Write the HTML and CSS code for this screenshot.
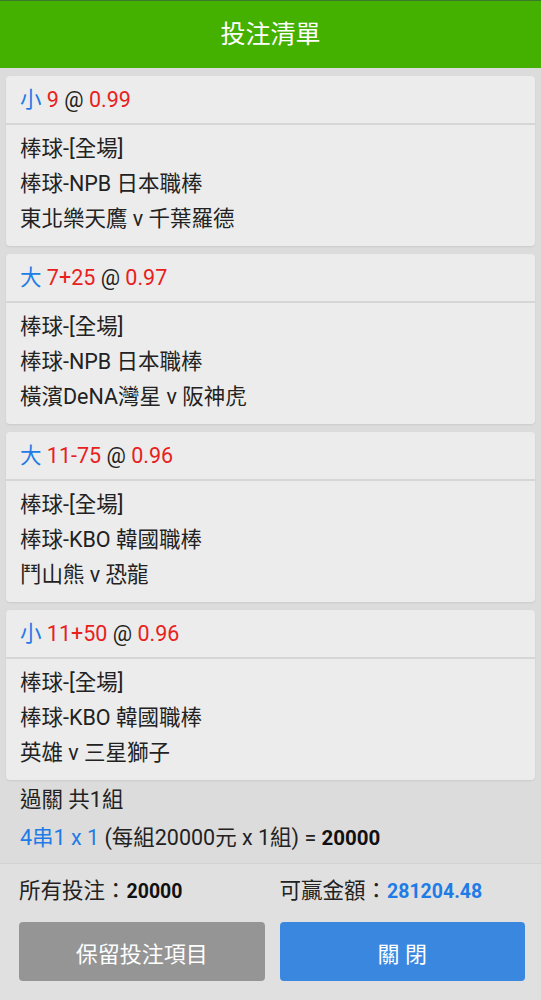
FILE: index.html
```html
<!DOCTYPE html>
<html lang="zh-Hant">
<head>
    <meta charset="UTF-8">
    <title>投注清單</title>
    <link rel="stylesheet" href="styles.css">
</head>
<body>

    <div class="topbar">投注清單</div>

    <div class="bets">
        <div class="card">
            <div class="card-head"><span class="blue">小</span> <span class="red">9</span> @ <span class="red">0.99</span></div>
            <div class="card-body">
                <div>棒球-[全場]</div>
                <div>棒球-NPB 日本職棒</div>
                <div>東北樂天鷹 v 千葉羅德</div>
            </div>
        </div>
        <div class="card">
            <div class="card-head"><span class="blue">大</span> <span class="red">7+25</span> @ <span class="red">0.97</span></div>
            <div class="card-body">
                <div>棒球-[全場]</div>
                <div>棒球-NPB 日本職棒</div>
                <div>橫濱DeNA灣星 v 阪神虎</div>
            </div>
        </div>
        <div class="card">
            <div class="card-head"><span class="blue">大</span> <span class="red">11-75</span> @ <span class="red">0.96</span></div>
            <div class="card-body">
                <div>棒球-[全場]</div>
                <div>棒球-KBO 韓國職棒</div>
                <div>鬥山熊 v 恐龍</div>
            </div>
        </div>
        <div class="card">
            <div class="card-head"><span class="blue">小</span> <span class="red">11+50</span> @ <span class="red">0.96</span></div>
            <div class="card-body">
                <div>棒球-[全場]</div>
                <div>棒球-KBO 韓國職棒</div>
                <div>英雄 v 三星獅子</div>
            </div>
        </div>
    </div>

    <div class="summary">
        <div>過關 共1組</div>
        <div><span class="blue">4串1 x 1</span> (每組20000元 x 1組) = <b>20000</b></div>
    </div>

    <div class="footer">
        <div class="totals">
            <div>所有投注：<b>20000</b></div>
            <div>可贏金額：<b class="blue">281204.48</b></div>
        </div>
        <div class="actions">
            <button class="btn btn-keep">保留投注項目</button>
            <button class="btn btn-close">關 閉</button>
        </div>
    </div>

</body>
</html>
```

FILE: styles.css
```css
body {
    margin: 0;
    font-family: Roboto, "Noto Sans CJK TC", sans-serif;
    font-size: 21.5px;
    background-color: #dcdcdc;
    color: #222;
    width: 541px;
}
b {
    font-size: 19.5px;
    color: #111;
}
.topbar {
    height: 67px;
    line-height: 67px;
    background-color: #44b000;
    border-top: 1px solid #3b7a2c;
    color: #fff;
    text-align: center;
    font-size: 25px;
}
.bets {
    padding: 8px 6px 0;
    display: flex;
    flex-direction: column;
    gap: 8px;
}
.card {
    background-color: #ececec;
    border-radius: 4px;
    box-shadow: 0 1px 2px rgba(0,0,0,0.08);
}
.card-head {
    height: 47px;
    line-height: 47px;
    padding: 0 14px;
    border-bottom: 2px solid #d6d6d6;
}
.card-body {
    padding: 6px 14px 10px;
    line-height: 35px;
}
.blue {
    color: #1f7be6;
}
.red {
    color: #e8211d;
}
.summary {
    padding: 1px 20px 6px;
    line-height: 38px;
    border-bottom: 1px solid #d2d2d2;
}
.summary b {
    font-size: 20.5px;
}
.footer {
    background-color: #e0e0e0;
    padding: 12px 16px 19px 19px;
}
.totals, .actions {
    display: grid;
    grid-template-columns: 1fr 1fr;
    column-gap: 15px;
}
.totals {
    line-height: 30px;
    margin-bottom: 15px;
}
.totals b.blue {
    color: #1f7be6;
}
.btn {
    height: 59px;
    border: none;
    border-radius: 4px;
    color: #fff;
    font-family: Roboto, "Noto Sans CJK TC", sans-serif;
    font-size: 22px;
    cursor: pointer;
}
.btn-keep {
    background-color: #959595;
}
.btn-close {
    background-color: #3a87e0;
}
```
